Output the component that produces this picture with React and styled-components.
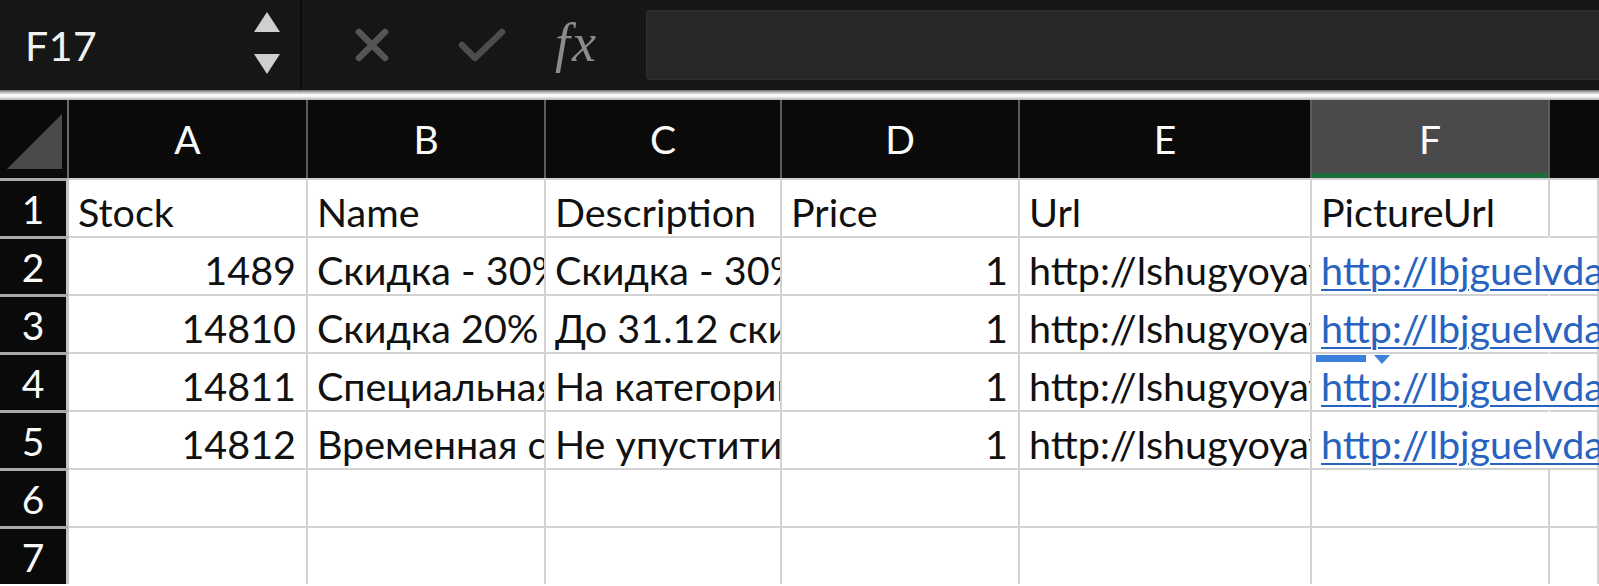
import React from 'react'
import styled, { createGlobalStyle } from 'styled-components'

const GlobalStyle = createGlobalStyle`
  html, body {
    margin: 0;
    padding: 0;
    background: #ffffff;
    overflow: hidden;
  }
  body {
    font-family: Lato, "Noto Sans", sans-serif;
  }
`

const COLS = '69px 239px 238px 236px 238px 292px 238px 1fr'

const rows = [
  { n: 1, cells: ['Stock', 'Name', 'Description', 'Price', 'Url', 'PictureUrl'], header: true },
  { n: 2, cells: ['1489', 'Скидка - 30% на всё', 'Скидка - 30% на весь ассортимент', '1', 'http://lshugyoyayb.ru/1', 'http://lbjguelvdaqw.ru/1.jpg'] },
  { n: 3, cells: ['14810', 'Скидка 20% на обувь', 'До 31.12 скидка на обувь', '1', 'http://lshugyoyayb.ru/2', 'http://lbjguelvdaqw.ru/2.jpg'] },
  { n: 4, cells: ['14811', 'Специальная цена', 'На категории товаров', '1', 'http://lshugyoyayb.ru/3', 'http://lbjguelvdaqw.ru/3.jpg'], marker: true },
  { n: 5, cells: ['14812', 'Временная скидка', 'Не упуститите шанс', '1', 'http://lshugyoyayb.ru/4', 'http://lbjguelvdaqw.ru/4.jpg'] },
  { n: 6, cells: ['', '', '', '', '', ''] },
  { n: 7, cells: ['', '', '', '', '', ''] },
]

const App = () => {
  return (
    <Page>
      <GlobalStyle />
      <TopBar>
        <NameBox>
          <CellName>F17</CellName>
          <Stepper>
            <svg width="28" height="22" viewBox="0 0 28 22"><polygon points="14,1 27,21 1,21" fill="#cfcfcf" /></svg>
            <svg width="28" height="22" viewBox="0 0 28 22"><polygon points="1,1 27,1 14,21" fill="#cfcfcf" /></svg>
          </Stepper>
        </NameBox>
        <Actions>
          <IconSlot>
            <svg width="38" height="38" viewBox="0 0 38 38">
              <path d="M6 6 L32 32 M32 6 L6 32" stroke="#555" strokeWidth="6.5" strokeLinecap="round" />
            </svg>
          </IconSlot>
          <IconSlot>
            <svg width="50" height="38" viewBox="0 0 50 38">
              <path d="M5 19 L18 32 L45 6" stroke="#4c4c4c" strokeWidth="6.5" fill="none" strokeLinecap="round" strokeLinejoin="round" />
            </svg>
          </IconSlot>
          <Fx>fx</Fx>
        </Actions>
        <FormulaInput />
      </TopBar>
      <Band />
      <HeaderRow>
        <Corner>
          <svg width="55" height="55" viewBox="0 0 55 55"><polygon points="0,55 55,55 55,0" fill="#4a4a4a" /></svg>
        </Corner>
        {['A', 'B', 'C', 'D', 'E', 'F', ''].map((c) => (
          <ColHead key={c || 'G'} $active={c === 'F'} $last={c === ''}>{c}</ColHead>
        ))}
      </HeaderRow>
      {rows.map((r) => (
        <Row key={r.n}>
          <RowHead>{r.n}</RowHead>
          {r.cells.map((v, i) => {
            const numeric = !r.header && (i === 0 || i === 3) && v !== ''
            const link = !r.header && i === 5 && v !== ''
            return (
              <Cell key={i} $right={numeric} $spill={link}>
                {link ? <Link>{v}</Link> : v}
                {link && r.marker && (
                  <Marker>
                    <MarkerBar />
                    <MarkerArrow />
                  </Marker>
                )}
              </Cell>
            )
          })}
          <Cell $noLeft={r.n >= 2 && r.n <= 5} />
        </Row>
      ))}
    </Page>
  )
}

const Page = styled.div`
  width: 1599px;
  height: 586px;
  overflow: hidden;
  background: #fff;
`

const TopBar = styled.div`
  height: 90px;
  background: #161616;
  display: flex;
  align-items: center;
`

const NameBox = styled.div`
  width: 302px;
  height: 100%;
  display: flex;
  align-items: center;
  justify-content: space-between;
  padding: 0 19px 0 25px;
  box-sizing: border-box;
  border-right: 2px solid #0b0b0b;
`

const CellName = styled.span`
  color: #f2f2f2;
  font-size: 41px;
  font-family: Lato, "Noto Sans", sans-serif;
  letter-spacing: 0.5px;
`

const Stepper = styled.div`
  display: flex;
  flex-direction: column;
  gap: 20px;
  margin-top: -4px;
  svg { display: block; }
`

const Actions = styled.div`
  width: 344px;
  display: flex;
  align-items: center;
  padding-left: 51px;
  box-sizing: border-box;
`

const IconSlot = styled.div`
  width: 104px;
  display: flex;
  align-items: center;
  svg { display: block; }
`

const Fx = styled.span`
  font-family: "Liberation Serif", "DejaVu Serif", serif;
  font-style: italic;
  font-size: 54px;
  color: #8c8c8c;
  margin-top: -4px;
  margin-left: -6px;
  letter-spacing: 2px;
`

const FormulaInput = styled.div`
  flex: 1;
  height: 68px;
  background: #282828;
  border: 1px solid #303030;
  border-right: none;
  border-radius: 4px 0 0 4px;
`

const Band = styled.div`
  height: 10px;
  background: linear-gradient(#6d6d6d 0, #bdbdbd 25%, #f6f6f6 45%, #ffffff 60%, #b5b5b5 100%);
`

const HeaderRow = styled.div`
  display: grid;
  grid-template-columns: ${COLS};
  height: 78px;
  background: #0a0a0a;
`

const Corner = styled.div`
  display: flex;
  align-items: flex-end;
  justify-content: flex-end;
  padding: 0 5px 9px 0;
  border-right: 2px solid #6a6a6a;
  svg { display: block; }
`

const ColHead = styled.div`
  display: flex;
  align-items: center;
  justify-content: center;
  color: #fafafa;
  font-size: 39px;
  font-family: Lato, "Noto Sans", sans-serif;
  background: ${(p) => (p.$active ? '#4a4a4a' : '#0a0a0a')};
  border-right: ${(p) => (p.$last ? 'none' : '2px solid #5c5c5c')};
  box-shadow: ${(p) => (p.$active ? 'inset 0 -5px 0 #1d6b38' : 'none')};
`

const Row = styled.div`
  display: grid;
  grid-template-columns: ${COLS};
  height: 58px;
`

const RowHead = styled.div`
  background: #0a0a0a;
  color: #fafafa;
  font-size: 39px;
  font-family: Lato, "Noto Sans", sans-serif;
  display: flex;
  align-items: center;
  justify-content: center;
  border-top: 3px solid #a9a9a9;
  border-right: 3px solid #c4c4c4;
`

const Cell = styled.div`
  position: relative;
  display: flex;
  align-items: center;
  justify-content: ${(p) => (p.$right ? 'flex-end' : 'flex-start')};
  padding: 6px ${(p) => (p.$right ? '10px' : '0')} 0 ${(p) => (p.$right ? '0' : '9px')};
  border-top: 2px solid #d2d2d2;
  border-right: ${(p) => (p.$spill ? '2px solid transparent' : '2px solid #d2d2d2')};
  font-size: 39.5px;
  color: #111;
  font-family: Lato, "Noto Sans", sans-serif;
  white-space: nowrap;
  overflow: ${(p) => (p.$spill ? 'visible' : 'hidden')};
  z-index: ${(p) => (p.$spill ? 1 : 0)};
  min-width: 0;
`

const Link = styled.span`
  color: #2763bf;
  text-decoration: underline;
  text-decoration-thickness: 2px;
  text-underline-offset: 4px;
`

const Marker = styled.div`
  position: absolute;
  top: 1px;
  left: 4px;
  display: flex;
  align-items: flex-start;
  gap: 8px;
`

const MarkerBar = styled.div`
  width: 50px;
  height: 7px;
  background: #3d7fdc;
`

const MarkerArrow = styled.div`
  width: 0;
  height: 0;
  border-left: 8px solid transparent;
  border-right: 8px solid transparent;
  border-top: 9px solid #3d7fdc;
`

export default App
